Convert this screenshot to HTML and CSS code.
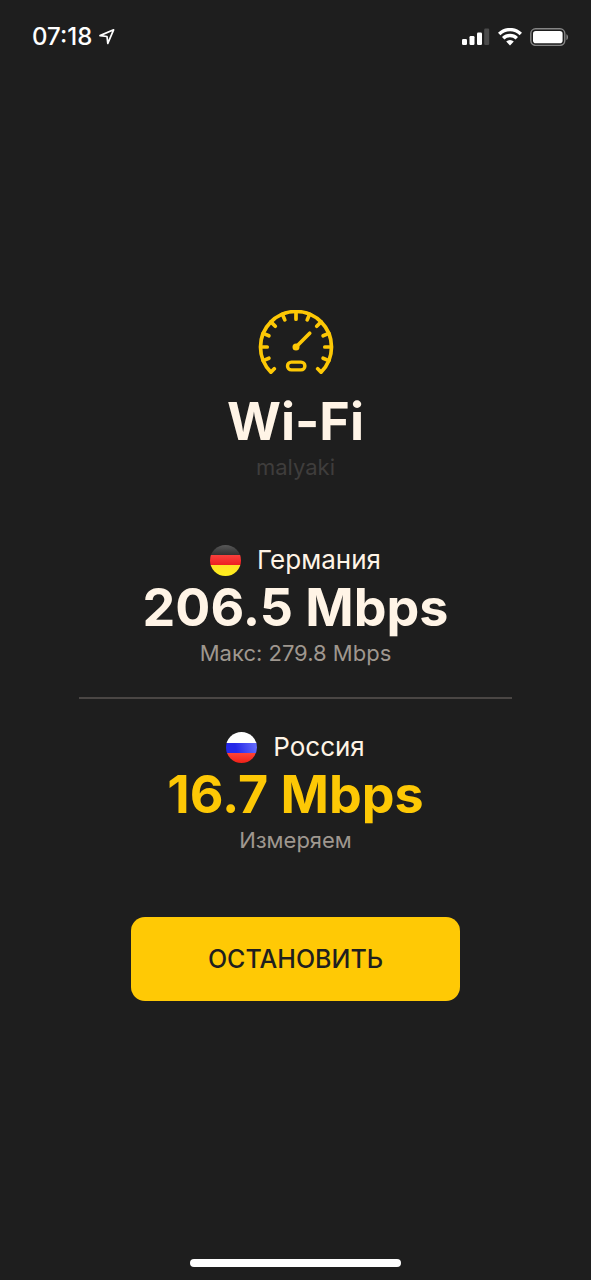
FILE: index.html
```html
<!DOCTYPE html>
<html lang="ru">
<head>
<meta charset="utf-8">
<meta name="viewport" content="width=device-width, initial-scale=1">
<title>Wi-Fi</title>
<link rel="stylesheet" href="styles.css">
</head>
<body>
<div class="screen">
  <header class="status-bar">
    <div class="status-group">
      <time class="clock">07:18</time>
      <svg class="location" viewBox="0 0 18 18" width="18" height="18" aria-hidden="true">
        <path d="M2 7.6 15.6 1.8 9.8 15.4 9 8.5Z" fill="none" stroke="#fff" stroke-width="1.7" stroke-linejoin="round"/>
      </svg>
    </div>
    <div class="status-group indicators">
      <svg viewBox="0 0 28 18" width="28" height="18" aria-hidden="true">
        <g fill="#fff">
          <rect x="0" y="11" width="5" height="6" rx="1.2"/>
          <rect x="7.5" y="8" width="5" height="9" rx="1.2"/>
          <rect x="15" y="4.5" width="5" height="12.5" rx="1.2"/>
        </g>
        <rect x="22.2" y="0.5" width="5" height="16.5" rx="1.2" fill="#4b4b4b"/>
      </svg>
      <svg viewBox="0 0 24 18" width="24" height="18" aria-hidden="true">
        <g fill="none" stroke="#fff" stroke-width="3.4">
          <path d="M1.200 6a15.400 15.400 0 0 1 21.600 0"/>
          <path d="M5.200 10.300a9.600 9.600 0 0 1 13.600 0"/>
        </g>
        <path d="M12 17.400 8.200 13.600a5.400 5.400 0 0 1 7.600 0Z" fill="#fff"/>
      </svg>
      <svg viewBox="0 0 38 18" width="38" height="18" aria-hidden="true">
        <rect x="0.8" y="0.8" width="34" height="16.600" rx="4.800" fill="none" stroke="#858585" stroke-width="1.400"/>
        <rect x="3" y="3" width="29.600" height="12.200" rx="2.800" fill="#fff"/>
        <path d="M36.400 6.200c2.200.9 2.200 5 0 5.900Z" fill="#858585"/>
      </svg>
    </div>
  </header>

  <main class="content">
    <section class="network">
      <svg class="gauge" viewBox="0 0 76 66" width="76" height="66" aria-hidden="true">
        <g fill="none" stroke="#fdc805" stroke-width="3.700" stroke-linecap="round" stroke-linejoin="round">
          <path d="M16.300 58.700 12.900 62.100A35.500 35.500 0 1 1 63.100 62.100L59.700 58.700"/>
          <path d="M38 3v6.200M24.400 4.200l2.400 5.700M12.900 11.900l4.400 4.400M5.200 23.400l5.700 2.400M3 37h6.200M5.200 50.600l5.700-2.400M51.600 4.200l-2.400 5.700M63.100 11.900l-4.400 4.400M70.800 23.400l-5.700 2.400M73 37h-6.200M70.800 50.600l-5.700-2.400"/>
          <path d="M38 37 51.700 23.300"/>
          <rect x="29.500" y="52.100" width="17.400" height="7.800" rx="3.900" stroke-width="3.400"/>
        </g>
        <circle cx="38" cy="37" r="3.500" fill="#fdc805"/>
      </svg>
      <h1 class="headline">Wi-Fi</h1>
      <p class="caption faint">malyaki</p>
    </section>

    <section class="results">
      <article class="result">
        <h2 class="country"><span class="flag germany"></span>Германия</h2>
        <p class="headline">206.5 Mbps</p>
        <p class="caption">Макс: 279.8 Mbps</p>
      </article>
      <hr class="divider">
      <article class="result">
        <h2 class="country"><span class="flag russia"></span>Россия</h2>
        <p class="headline active">16.7 Mbps</p>
        <p class="caption">Измеряем</p>
      </article>
    </section>

    <button class="stop" type="button">ОСТАНОВИТЬ</button>
  </main>

  <footer class="home"><span class="home-bar"></span></footer>
</div>
</body>
</html>
```
FILE: styles.css
```css
* {
  box-sizing: border-box;
}

body,
h1,
h2,
p {
  margin: 0;
}

body {
  background: #1e1e1e;
  color: #fff4e6;
  font-family: Inter, "Liberation Sans", sans-serif;
}

.screen {
  display: flex;
  flex-direction: column;
  min-height: 100vh;
}

.status-bar {
  display: flex;
  justify-content: space-between;
  align-items: center;
  height: 74px;
  padding: 0 23px 0 32px;
}

.status-group {
  display: flex;
  align-items: center;
  gap: 6px;
}

.indicators {
  gap: 8px;
}

.clock {
  color: #fff;
  font-size: 24px;
  font-weight: 500;
  line-height: 32px;
}

.content {
  flex: 1;
  display: flex;
  flex-direction: column;
  justify-content: center;
  gap: 64px;
  padding: 0 79px;
  text-align: center;
}

.gauge {
  display: block;
  margin: 0 auto 14px;
}

.headline {
  font-size: 52px;
  font-weight: 700;
  line-height: 64px;
}

.active {
  color: #fdc805;
}

.caption {
  color: #9f978f;
  font-size: 22px;
  line-height: 26px;
}

.faint {
  color: #3f3d3c;
}

.country {
  display: flex;
  justify-content: center;
  align-items: center;
  gap: 16px;
  font-size: 26px;
  font-weight: 400;
  line-height: 32px;
}

.flag {
  width: 31px;
  height: 31px;
  border-radius: 50%;
}

.germany {
  background: linear-gradient(#585858, #303030 33%, #f8403c 33%, #ee1d20 66%, #ffe126 66%, #fff01c);
}

.russia {
  background:
    linear-gradient(#fff 34%, transparent 34%, transparent 67%, #ff4536 67%, #ef2018),
    linear-gradient(75deg, #2528e8 35%, #7078ff);
}

.divider {
  height: 2px;
  margin: 31px 0 32px;
  border: 0;
  background: #4a4644;
}

.stop {
  margin: 0 52px;
  padding: 26px 0;
  border: 0;
  border-radius: 14px;
  background: #ffc905;
  color: #1f1f1f;
  font: inherit;
  font-size: 25px;
  font-weight: 500;
  line-height: 32px;
}

.home {
  display: flex;
  justify-content: center;
  align-items: flex-start;
  height: 43px;
  padding-top: 22px;
}

.home-bar {
  width: 211px;
  height: 8px;
  border-radius: 4px;
  background: #fff;
}
```
